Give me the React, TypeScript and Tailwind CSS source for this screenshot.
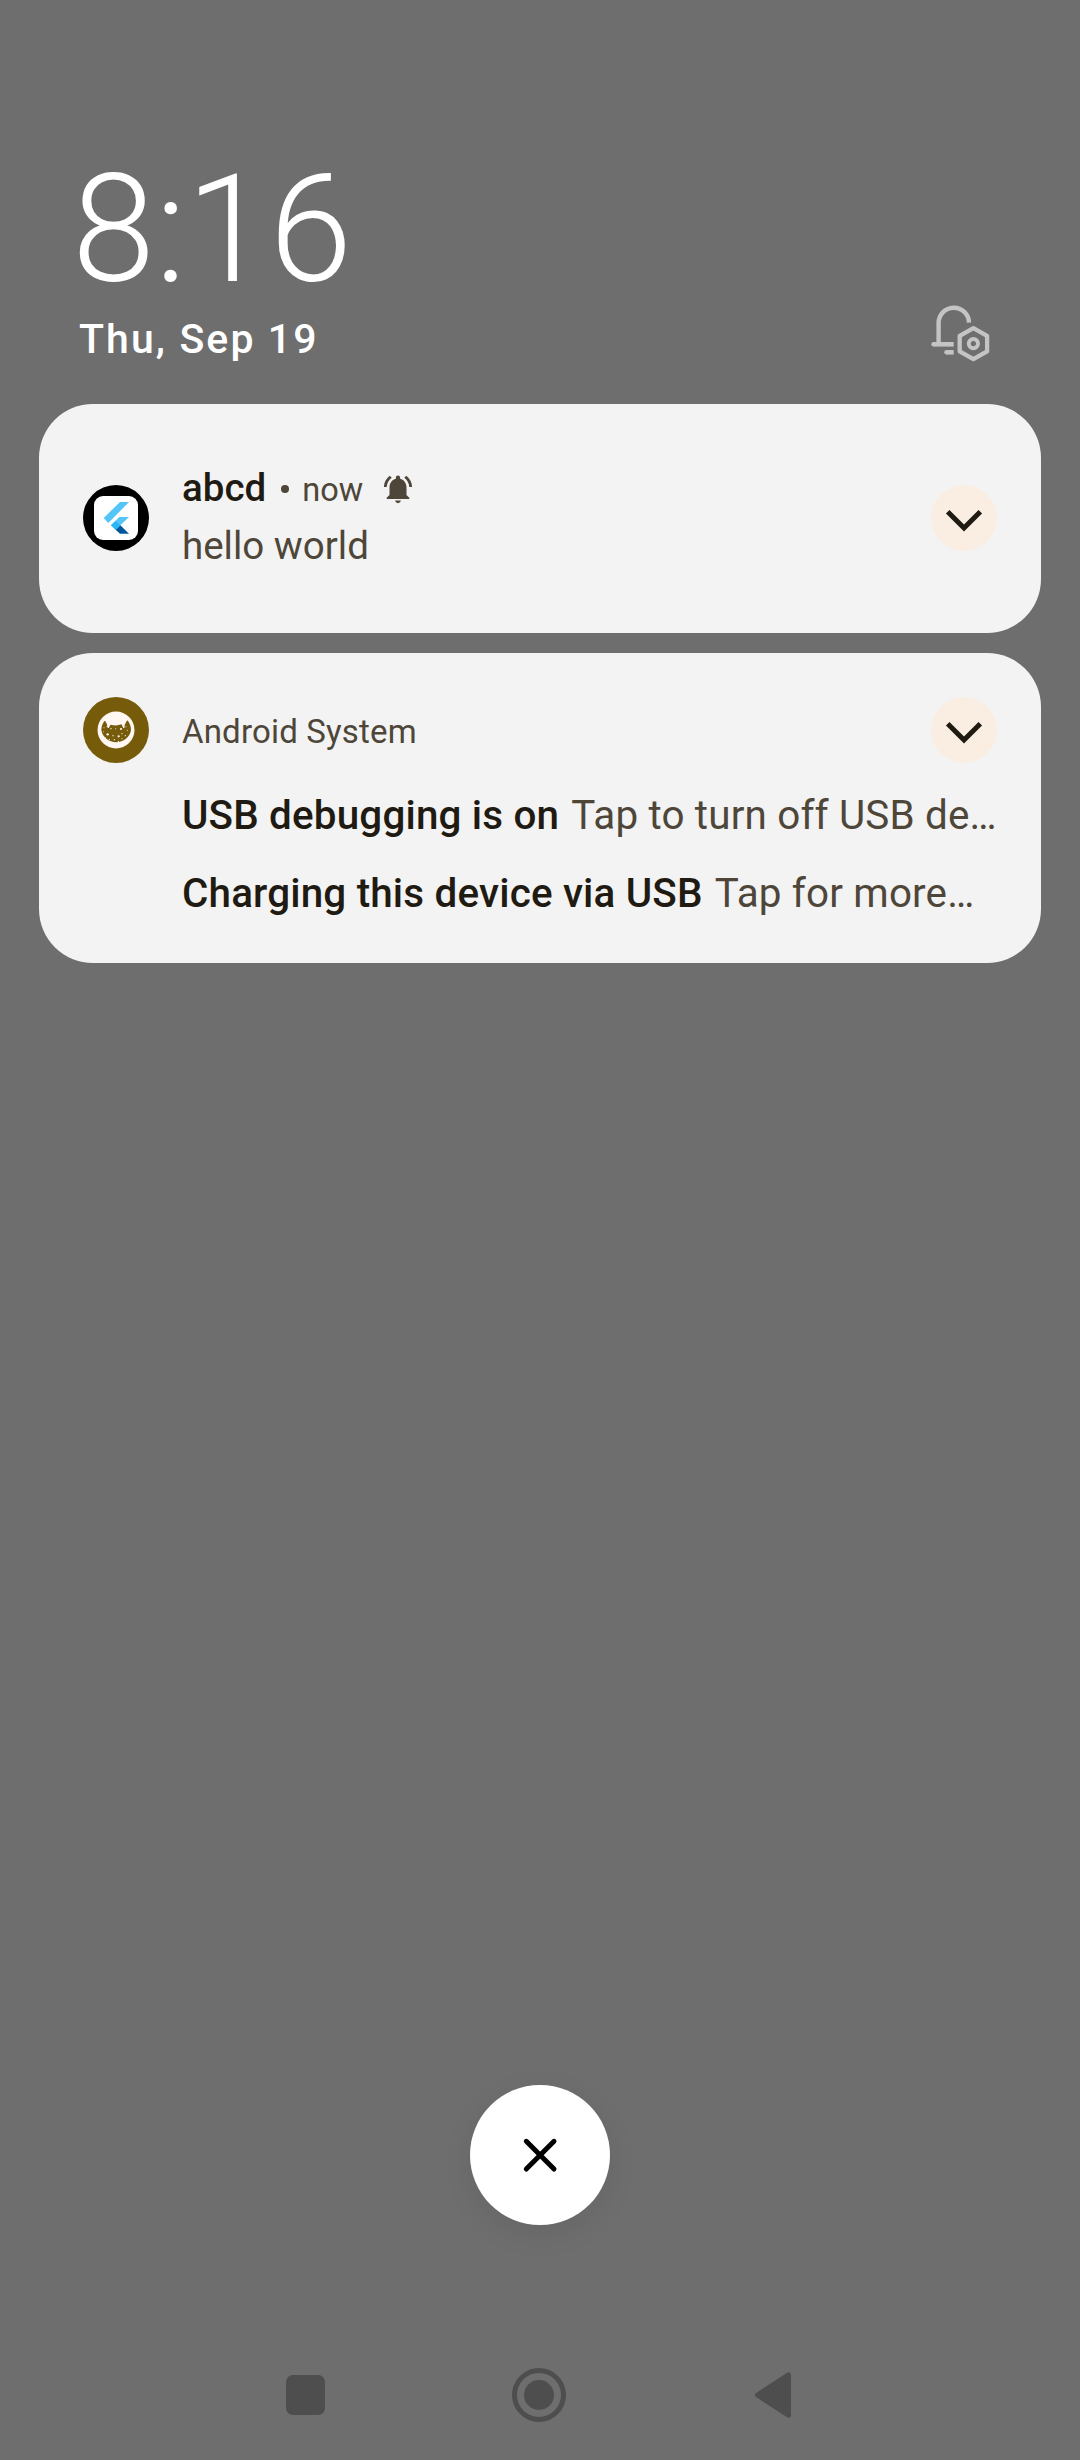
import React from "react";

function BellSettingsIcon() {
  return (
    <svg className="h-[60px] w-[60px]" viewBox="30 14 60 60" fill="none" stroke="#c4c4c4">
      <path d="M38.6 54V33.2a15.2 15.2 0 0 1 30.4-.6" strokeWidth="4.4" />
      <path d="M33.6 54.3H53.7" strokeWidth="4.6" />
      <circle cx="33.6" cy="54.3" r="2.3" fill="#c4c4c4" stroke="none" />
      <path d="M46.6 62.3h7.1" strokeWidth="4.6" />
      <circle cx="46.6" cy="62.3" r="2.3" fill="#c4c4c4" stroke="none" />
      <path d="M73.4 38.1 87.1 45.8V61.4L73.4 69.1 59.7 61.4V45.8Z" strokeWidth="4.3" strokeLinejoin="round" />
      <circle cx="73.4" cy="53.6" r="4.6" strokeWidth="4" />
    </svg>
  );
}

function RingingBellIcon() {
  return (
    <svg className="h-[34px] w-[34px]" viewBox="0 0 24 24" fill="#4e4639">
      <path d="M7.58 4.08 6.15 2.65C3.75 4.48 2.17 7.3 2.03 10.5h2c.15-2.65 1.51-4.97 3.55-6.42zM19.97 10.5h2c-.15-3.2-1.73-6.02-4.12-7.85l-1.42 1.43c2.02 1.45 3.39 3.77 3.54 6.42zM18 11c0-3.07-1.64-5.64-4.5-6.32V4c0-.83-.67-1.5-1.5-1.5s-1.5.67-1.5 1.5v.68C7.63 5.36 6 7.92 6 11v5.3l-2 1.9v.9h16v-.9l-2-1.9zM12 22c1.1 0 1.9-.8 2-1.8h-4c.1 1 .9 1.8 2 1.8z" />
    </svg>
  );
}

function FlutterIcon() {
  return (
    <div className="flex size-[66px] shrink-0 items-center justify-center rounded-full bg-black">
      <div className="size-[44px] rounded-[9px] bg-white">
        <svg className="size-[44px]" viewBox="72 78 132 132">
          <path d="M101 144 150 96H177L115 159Z" fill="#54c5f8" />
          <path d="M123 166 148 141H177L151 166 137 179Z" fill="#54c5f8" />
          <path d="M137 179 151 166 177 191H150Z" fill="#01579b" />
          <path d="M123 166 137 152 151 166 137 180Z" fill="#29b6f6" />
        </svg>
      </div>
    </div>
  );
}

const specks = [
  [102, 143, 1.5], [109, 139, 1.2], [123, 146, 2], [137, 146, 1.5], [153, 147, 3.2],
  [168, 140, 1.5], [172, 151, 1.5], [101, 155, 1.5], [113, 163, 3.6], [129, 167, 2],
  [146, 169, 3.4], [156, 161, 1.8], [166, 167, 1.8], [118, 178, 1.8], [133, 179, 2],
  [145, 184, 2], [156, 176, 1.6], [107, 172, 1.4],
];

function AndroidSystemIcon() {
  return (
    <svg className="size-[66px] shrink-0" viewBox="39 51 198 198">
      <circle cx="138" cy="150" r="99" fill="#765b0b" />
      <circle cx="138" cy="150" r="55.5" fill="#fff8f2" />
      <path
        d="M104 122C108 124 109 130 111 133 113 136 109 141 114 144 119 144 118 136 123 134 132 137 145 137 154 133 158 136 157 143 161 145 166 144 162 137 165 133 168 130 168 124 172 121 179 129 183 139 183 150A45 43 0 0 1 94 150C94 139 98 129 104 122Z"
        fill="#765b0b"
      />
      {specks.map(([x, y, r]) => (
        <circle key={`${x}-${y}`} cx={x} cy={y} r={r} fill="#fff8f2" />
      ))}
    </svg>
  );
}

function ExpandButton() {
  return (
    <button aria-label="Expand" className="size-[66px] shrink-0 rounded-full bg-[#f9eee1]">
      <svg className="size-[66px]" viewBox="0 0 66 66" fill="none" stroke="#1f1b13" strokeWidth="5">
        <path d="M16.7 26.7 33 43 49.3 26.7" />
      </svg>
    </button>
  );
}

function SummaryLine({ title, text }: { title: string; text: string }) {
  return (
    <p className="h-[78px] whitespace-nowrap text-[40.4px] leading-[78px] tracking-[0.17px] text-[#4e4639]">
      <span className="font-medium text-[#1f1b13]">{title}</span>
      <span className="ml-[12px]">{text}</span>
    </p>
  );
}

export default function App() {
  return (
    <div className="flex h-[2460px] w-[1080px] flex-col overflow-hidden bg-[#6e6e6e] font-['Roboto',sans-serif]">
      <header className="flex h-[404px] items-end justify-between pr-[90px] pl-[79px] text-white">
        <div className="mb-[41px]">
          <h1 className="-ml-[7px] text-[149.5px] leading-[150px] font-light">8:16</h1>
          <p className="mt-[10px] text-[41px] leading-[48px] font-medium tracking-[2.1px]">Thu, Sep 19</p>
        </div>
        <div className="mb-[40px]">
          <BellSettingsIcon />
        </div>
      </header>

      <main className="mx-[39px] flex flex-col gap-5">
        <section className="flex h-[229px] items-center rounded-[54px] bg-[#f3f3f3] px-[44px] pb-px">
          <FlutterIcon />
          <div className="mb-[3px] ml-[33px] flex-1">
            <div className="flex h-[58px] items-center text-[#4e4639]">
              <span className="text-[38.5px] leading-[58px] font-medium text-[#1f1b13]">abcd</span>
              <span className="mt-[2px] ml-[15px] size-[8px] rounded-full bg-[#4e4639]" />
              <span className="ml-[13px] pt-[4px] text-[32.5px] leading-[58px]">now</span>
              <span className="mt-[3px] ml-[18px]">
                <RingingBellIcon />
              </span>
            </div>
            <p className="text-[38.5px] leading-[58px] text-[#4e4639]">hello world</p>
          </div>
          <ExpandButton />
        </section>

        <section className="h-[310px] rounded-[54px] bg-[#f3f3f3] px-[44px] pt-[44px]">
          <div className="flex h-[66px] items-center">
            <AndroidSystemIcon />
            <span className="ml-[33px] flex-1 pt-[3px] text-[33px] leading-[48px] tracking-[0.18px] text-[#4e4639]">
              Android System
            </span>
            <ExpandButton />
          </div>
          <div className="mt-[14px] ml-[99px]">
            <SummaryLine title="USB debugging is on" text="Tap to turn off USB de…" />
            <SummaryLine title="Charging this device via USB" text="Tap for more…" />
          </div>
        </section>
      </main>

      <div className="mt-auto flex justify-center">
        <button
          aria-label="Clear all"
          className="flex size-[140px] items-center justify-center rounded-full bg-white shadow-[0_8px_32px_rgba(0,0,0,0.07)]"
        >
          <svg className="size-[40px]" viewBox="0 0 40 40" fill="none" stroke="#000" strokeWidth="5" strokeLinecap="round">
            <path d="M6.3 6.3 34 34M34 6.3 6.3 34" />
          </svg>
        </button>
      </div>

      <nav className="mt-[105px] flex h-[130px] items-center justify-between pr-[289px] pl-[286px]">
        <span className="h-[40px] w-[39px] rounded-[7px] bg-[#4e4e4e]" />
        <svg className="size-[54px]" viewBox="0 0 54 54" fill="none">
          <circle cx="27" cy="27" r="24.5" stroke="#4e4e4e" strokeWidth="5" />
          <circle cx="27" cy="27" r="15" fill="#4e4e4e" />
        </svg>
        <svg className="h-[46px] w-[38px]" viewBox="0 0 38 46">
          <path d="M4.5 23 35.5 2.8V43.2Z" fill="#4e4e4e" stroke="#4e4e4e" strokeWidth="5" strokeLinejoin="round" />
        </svg>
      </nav>
    </div>
  );
}
